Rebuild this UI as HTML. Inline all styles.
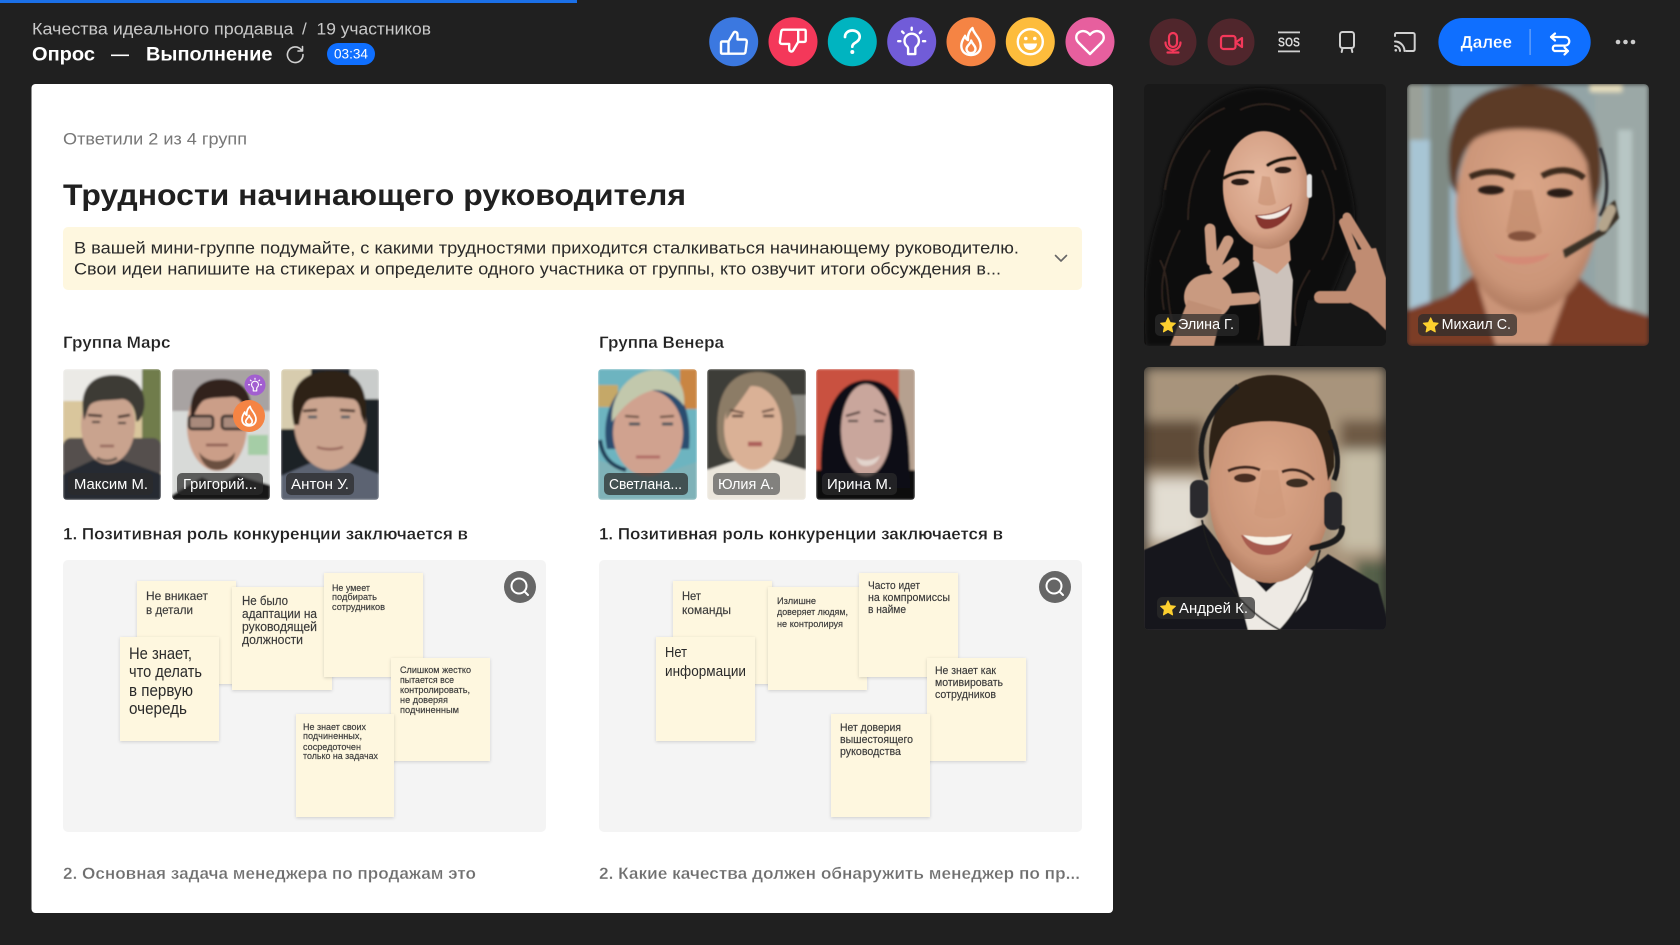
<!DOCTYPE html>
<html lang="ru"><head><meta charset="utf-8"><title>Опрос — Выполнение</title>
<style>
html,body{margin:0;padding:0;background:#202020;width:1680px;height:945px;overflow:hidden}
svg{display:block;position:absolute;left:0;top:0}
text{font-family:"Liberation Sans","Noto Sans CJK SC",sans-serif;white-space:pre}
.s{fill:#3a3a3a;font-size:11px;stroke:#3a3a3a;stroke-width:.15}
.st{fill:#fef7df;filter:url(#ss)}
.l{fill:#fff;font-size:15px}
.ic{fill:none;stroke:#fff;stroke-width:2.4;stroke-linecap:round;stroke-linejoin:round}
.lab{fill:#2b2b2b;fill-opacity:.72}
</style></head><body>
<svg width="1680" height="945" viewBox="0 0 1680 945" xmlns="http://www.w3.org/2000/svg">
<defs>
<filter id="ss" x="-10%" y="-10%" width="125%" height="125%"><feDropShadow dx="0" dy="1" stdDeviation="1.5" flood-color="#000" flood-opacity=".16"/></filter>
<filter id="b05" x="-20%" y="-20%" width="140%" height="140%"><feGaussianBlur stdDeviation=".6"/></filter>
<filter id="b1" x="-20%" y="-20%" width="140%" height="140%"><feGaussianBlur stdDeviation="1"/></filter>
<filter id="b2" x="-20%" y="-20%" width="140%" height="140%"><feGaussianBlur stdDeviation="2.500"/></filter>
<filter id="b5" x="-20%" y="-20%" width="140%" height="140%"><feGaussianBlur stdDeviation="6"/></filter>
<radialGradient id="skinA" cx=".45" cy=".42" r=".62"><stop offset="0" stop-color="#e6b9a0"/><stop offset=".7" stop-color="#d6a287"/><stop offset="1" stop-color="#b07c62"/></radialGradient>
<radialGradient id="skinM" cx=".5" cy=".42" r=".62"><stop offset="0" stop-color="#dba688"/><stop offset=".75" stop-color="#cb9578"/><stop offset="1" stop-color="#a87358"/></radialGradient>
<radialGradient id="skinE" cx=".5" cy=".42" r=".62"><stop offset="0" stop-color="#ecc7b0"/><stop offset=".75" stop-color="#e0ad95"/><stop offset="1" stop-color="#b5806a"/></radialGradient>
<clipPath id="t1"><rect x="1144" y="84" width="242" height="262" rx="5"/></clipPath>
<clipPath id="t2"><rect x="1407" y="84" width="242" height="262" rx="5"/></clipPath>
<clipPath id="t3"><rect x="1144" y="367" width="242" height="263" rx="5"/></clipPath>
<clipPath id="a1"><rect x="63" y="369" width="98" height="131" rx="4"/></clipPath>
<clipPath id="a2"><rect x="172" y="369" width="98" height="131" rx="4"/></clipPath>
<clipPath id="a3"><rect x="281" y="369" width="98" height="131" rx="4"/></clipPath>
<clipPath id="a4"><rect x="598" y="369" width="99" height="131" rx="4"/></clipPath>
<clipPath id="a5"><rect x="707" y="369" width="99" height="131" rx="4"/></clipPath>
<clipPath id="a6"><rect x="816" y="369" width="99" height="131" rx="4"/></clipPath>
<path id="star" d="M0-7.200 2.200-2.400 7.400-1.800 3.600 1.700 4.600 6.900 0 4.300-4.600 6.900-3.600 1.700-7.400-1.800-2.200-2.400Z" fill="#fdd02f" stroke="#fdd02f" stroke-width="1" stroke-linejoin="round"/>
<g id="flame" class="ic"><path d="M1.500-14c1 6 8.200 9.800 8.200 17.800 0 5.600-4 9.200-9.700 9.200s-9.700-3.600-9.700-9.200c0-4.500 2.300-7.300 3.800-10 .5 2.500 1.500 3.800 2.900 4.300-.6-5 1.500-9.600 4.500-12.100z"/><path d="M.2-1.500c.5 3 4.300 5 4.300 8.300 0 2.800-2 4.300-4.500 4.300s-4.500-1.500-4.500-4.300c0-3 4.200-5 4.700-8.300z"/></g>
<g id="bulb" class="ic"><path d="M-4.500 4.800a7.200 7.200 0 1 1 9 0c-.7.6-.9 1.300-.9 2.200v5.400h-7.200V7c0-.9-.2-1.600-.9-2.200z"/><path d="M-13.500-.5h2.200M11.300-.5h2.200M0-14v2.200M-9.600-10.200l1.500 1.500M9.600-10.200 8.100-8.700"/></g>
</defs>

<rect width="1680" height="945" fill="#202020"/>
<rect x="0" y="0" width="577" height="3" fill="#1b70e8"/>

<!-- header text -->
<text x="32" y="34.500" fill="#c9c9c9" font-size="17" textLength="261.500" lengthAdjust="spacingAndGlyphs">Качества идеального продавца</text>
<text x="302" y="34.500" fill="#c9c9c9" font-size="17">/</text>
<text x="316.500" y="34.500" fill="#c9c9c9" font-size="17" textLength="114.500" lengthAdjust="spacingAndGlyphs">19 участников</text>
<text x="32" y="60.500" fill="#fff" font-size="19" font-weight="700" textLength="63" lengthAdjust="spacingAndGlyphs">Опрос</text>
<rect x="111" y="54.500" width="18" height="1.600" fill="#fff"/>
<text x="146" y="60.500" fill="#fff" font-size="19" font-weight="700" textLength="126.500" lengthAdjust="spacingAndGlyphs">Выполнение</text>
<path d="M301 49.500a7.800 7.800 0 1 0 2 5M302.500 46.500v4.500H298" fill="none" stroke="#d0d0d0" stroke-width="1.600" stroke-linecap="round" stroke-linejoin="round"/>
<rect x="327" y="43" width="48" height="22" rx="11" fill="#0f6fff"/>
<text x="334" y="58.500" fill="#fff" font-size="13.500" textLength="34" lengthAdjust="spacingAndGlyphs">03:34</text>

<!-- reactions -->
<circle cx="733.700" cy="41.700" r="24.500" fill="#3b78e0"/>
<path class="ic" d="M728.500 53.500V41.500l5-8.500c.9-1.800 4-1.400 4 1.500v5h7.200c1.600 0 2.300 1 2.100 2.500l-1.300 9.800c-.2 1.200-1 1.900-2.200 1.900H722.500c-1 0-1.500-.6-1.500-1.500V43c0-1 .6-1.500 1.500-1.500h6"/>
<circle cx="793" cy="41.700" r="24.500" fill="#f4385a"/>
<path class="ic" transform="rotate(180 763.350 41.700)" d="M728.500 53.500V41.500l5-8.500c.9-1.800 4-1.400 4 1.500v5h7.200c1.600 0 2.300 1 2.100 2.500l-1.300 9.800c-.2 1.200-1 1.900-2.200 1.900H722.500c-1 0-1.500-.6-1.500-1.500V43c0-1 .6-1.500 1.500-1.500h6"/>
<circle cx="852.300" cy="41.700" r="24.500" fill="#00b4c0"/>
<path class="ic" style="stroke-width:2.700" d="M845 37c0-4 3.300-6.500 7.200-6.500 4.100 0 7.500 2.500 7.500 6.300 0 3-2 4.500-4 5.700-2 1.200-3.400 2.100-3.400 4.200"/><circle cx="852.300" cy="52" r="2" fill="#fff"/>
<circle cx="911.700" cy="41.700" r="24.500" fill="#715cd8"/>
<use href="#bulb" x="911.700" y="41.700"/>
<circle cx="971" cy="41.700" r="24.500" fill="#f58444"/>
<use href="#flame" x="971" y="42"/>
<circle cx="1030.300" cy="41.700" r="24.500" fill="#fdbc3c"/>
<circle class="ic" cx="1030.300" cy="41.700" r="12.500"/><circle cx="1025.800" cy="38.500" r="1.800" fill="#fff"/><circle cx="1034.800" cy="38.500" r="1.800" fill="#fff"/><path d="M1023.500 43.500h13.600c-.4 4.200-3.200 6.500-6.800 6.500s-6.400-2.300-6.800-6.500z" fill="#fff"/>
<circle cx="1090" cy="41.700" r="24.500" fill="#e75f9e"/>
<path class="ic" d="M1090 54l-11.500-11.500c-3-3-3-7.500 0-9.800 3-2.400 8-2.400 11.500 2 3.500-4.400 8.500-4.400 11.500-2 3 2.300 3 6.800 0 9.800z"/>

<!-- media buttons -->
<circle cx="1173" cy="42" r="23.500" fill="#50262c"/>
<g fill="none" stroke="#f4385a" stroke-width="2.200" stroke-linecap="round"><rect x="1169" y="33" width="8" height="14" rx="4"/><path d="M1165.500 42.500a7.500 7.500 0 0 0 15 0M1173 50v2.500M1167.500 52.500h11"/></g>
<circle cx="1231" cy="42" r="23.500" fill="#50262c"/>
<g fill="none" stroke="#f4385a" stroke-width="2.200" stroke-linejoin="round"><rect x="1221" y="36" width="14.500" height="13" rx="2.500"/><path d="M1235.500 42.500l6.500-4.500v9z"/></g>
<rect x="1278" y="31.500" width="22" height="1.800" fill="#d0d0d0"/><rect x="1278" y="50.500" width="22" height="1.800" fill="#d0d0d0"/>
<text x="1278" y="46.500" fill="#d8d8d8" font-size="13" font-weight="700" textLength="22" lengthAdjust="spacingAndGlyphs">SOS</text>
<g fill="none" stroke="#d0d0d0" stroke-width="2" stroke-linecap="round" stroke-linejoin="round"><rect x="1340" y="32" width="14" height="16" rx="2.500"/><path d="M1342.500 48l-.8 4M1351.500 48l.8 4"/></g>
<g fill="none" stroke="#d0d0d0" stroke-width="2" stroke-linecap="round" stroke-linejoin="round"><path d="M1395 36v-1.500c0-.8.700-1.500 1.500-1.500h16.500c1 0 1.700.7 1.700 1.700v14.600c0 1-.7 1.700-1.700 1.700h-7"/><path d="M1395 41.500a9.500 9.500 0 0 1 9.500 9.500M1395 46a5 5 0 0 1 5 5"/></g><circle cx="1395.800" cy="50.300" r="1.300" fill="#d0d0d0"/>
<rect x="1438.400" y="18" width="152.300" height="48" rx="24" fill="#0f6fff"/>
<text x="1460.500" y="47.800" fill="#fff" font-size="17.500" font-weight="700" textLength="51.500" lengthAdjust="spacingAndGlyphs" stroke="#0f6fff" stroke-width=".3">Далее</text>
<rect x="1529.500" y="29" width="1.200" height="26" fill="#72a8f8"/>
<g fill="none" stroke="#fff" stroke-width="2.200" stroke-linecap="round" stroke-linejoin="round"><path d="M1555 33.500l-4 3.500 4 3.500M1551 37h14a4.300 4.300 0 0 1 0 8.600h-10.500a3 3 0 0 0 0 5.400h13.500M1564.500 47.500l3.500 3.500-3.500 3.500"/></g>
<circle cx="1618" cy="42" r="2.300" fill="#ccc"/><circle cx="1625.500" cy="42" r="2.300" fill="#ccc"/><circle cx="1633" cy="42" r="2.300" fill="#ccc"/>

<!-- main card -->
<rect x="31.500" y="84" width="1081.500" height="829" rx="4" fill="#fff"/>
<text x="63" y="144.500" fill="#777" font-size="16.500" textLength="184" lengthAdjust="spacingAndGlyphs">Ответили 2 из 4 групп</text>
<text x="63" y="205" fill="#202020" font-size="30" font-weight="700" textLength="623" lengthAdjust="spacingAndGlyphs">Трудности начинающего руководителя</text>
<rect x="63" y="227" width="1019" height="63" rx="5" fill="#fef7df"/>
<text x="74" y="253.500" fill="#2a2a2a" font-size="17" textLength="945" lengthAdjust="spacingAndGlyphs">В вашей мини-группе подумайте, с какими трудностями приходится сталкиваться начинающему руководителю.</text>
<text x="74" y="274.500" fill="#2a2a2a" font-size="17" textLength="927" lengthAdjust="spacingAndGlyphs">Свои идеи напишите на стикерах и определите одного участника от группы, кто озвучит итоги обсуждения в...</text>
<path d="M1055.500 255.500l5.500 5.500 5.500-5.500" fill="none" stroke="#666" stroke-width="1.600" stroke-linecap="round" stroke-linejoin="round"/>
<text x="63" y="348" fill="#222" font-size="17" font-weight="700" textLength="107.500" lengthAdjust="spacingAndGlyphs" stroke="#fff" stroke-width=".25">Группа Марс</text>
<text x="599" y="348" fill="#222" font-size="17" font-weight="700" textLength="125" lengthAdjust="spacingAndGlyphs" stroke="#fff" stroke-width=".25">Группа Венера</text>

<!-- avatar: Максим -->
<g clip-path="url(#a1)"><g filter="url(#b1)">
<rect x="63" y="369" width="98" height="131" fill="#d9c69c"/><rect x="63" y="369" width="98" height="32" fill="#ebeae6"/>
<rect x="142" y="369" width="19" height="90" fill="#6f7b4c"/><rect x="63" y="438" width="98" height="40" fill="#55504e" rx="8"/>
<path d="M63 500v-26l30-14 30 0 38 14v26z" fill="#262a30"/>
<ellipse cx="108" cy="425" rx="27" ry="39" fill="#c9a38e"/>
<path d="M84 420c-6-30 6-45 30-45 22 0 33 16 30 34-2 8-5 14-8 12 0-12-6-22-14-22-14 2-26 0-32 6-3 4-3 10-6 15z" fill="#3e3a36"/>
<path d="M88 415l14 1M118 417l12-2" stroke="#3a2c26" stroke-width="2.500"/><path d="M92 422h8M118 423h8" stroke="#33292a" stroke-width="2"/>
<path d="M100 446h14" stroke="#94665c" stroke-width="2.500"/><path d="M97 458c6 4 14 4 20 0" stroke="#6a5a50" stroke-width="3" fill="none"/>
</g></g>
<rect class="lab" x="68" y="473" width="85" height="22" rx="5"/>
<text class="l" x="74" y="489" textLength="74" lengthAdjust="spacingAndGlyphs">Максим М.</text>

<!-- avatar: Григорий -->
<g clip-path="url(#a2)"><g filter="url(#b1)">
<rect x="172" y="369" width="98" height="131" fill="#d8dad8"/><rect x="172" y="369" width="98" height="42" fill="#a8a3a2"/>
<rect x="248" y="435" width="20" height="20" fill="#a5cda6"/>
<path d="M172 500v-5l30-18 15 8 20-10 33 10v15z" fill="#141212"/>
<ellipse cx="217" cy="426" rx="30" ry="45" fill="#cb9e88"/>
<path d="M191 420c-3-28 8-41 30-41 20 0 32 12 30 34l-6-2c-2-10-8-15-14-14-12 1-26 0-30 6-4 4-6 12-10 17z" fill="#33231d"/>
<rect x="189" y="416" width="24" height="13" rx="3" fill="#a98a7c" stroke="#1c1c1c" stroke-width="2.500"/><rect x="222" y="416" width="24" height="13" rx="3" fill="#a98a7c" stroke="#1c1c1c" stroke-width="2.500"/>
<path d="M206 445h22" stroke="#8a5a50" stroke-width="2.500"/><path d="M199 452c8 12 28 12 36 0 0 10-8 18-18 18-10 0-16-8-18-18z" fill="#6a5040"/>
</g></g>
<rect class="lab" x="177" y="473" width="86" height="22" rx="5"/>
<text class="l" x="183" y="489" textLength="74" lengthAdjust="spacingAndGlyphs">Григорий...</text>
<circle cx="255" cy="385" r="10.500" fill="#a25fd0"/>
<use href="#bulb" transform="translate(255 385) scale(.48)" style="stroke-width:2"/>
<circle cx="249" cy="416" r="16" fill="#f58444"/>
<use href="#flame" transform="translate(249 416.500) scale(.72)"/>

<!-- avatar: Антон -->
<g clip-path="url(#a3)"><g filter="url(#b1)">
<rect x="281" y="369" width="98" height="131" fill="#1d2026"/><rect x="281" y="369" width="30" height="60" fill="#d7ccae"/><rect x="350" y="369" width="29" height="30" fill="#c9cccb"/>
<path d="M281 500v-24l32-14h34l32 12v26z" fill="#5b6372"/>
<ellipse cx="330" cy="422" rx="36" ry="48" fill="#cba48f"/>
<path d="M294 425c-8-38 8-54 38-54 26 0 38 18 33 54l-4-10c-1-10-4-16-10-16-12-2-30-2-40 0-8 2-10 14-12 26z" fill="#2e2119"/>
<path d="M303 411l14-1M340 410l15 1" stroke="#3e2a22" stroke-width="2.500"/><path d="M308 417h9M341 417h9" stroke="#45525e" stroke-width="2.500"/>
<path d="M317 447c8 3 18 3 26 0" stroke="#96655a" stroke-width="2.500" fill="none"/>
</g></g>
<rect class="lab" x="286" y="473" width="68" height="22" rx="5"/>
<text class="l" x="291" y="489" textLength="58" lengthAdjust="spacingAndGlyphs">Антон У.</text>

<!-- avatar: Светлана -->
<g clip-path="url(#a4)"><g filter="url(#b1)">
<rect x="598" y="369" width="99" height="131" fill="#6db4c0"/><rect x="680" y="369" width="17" height="40" fill="#c98542"/><rect x="598" y="385" width="20" height="22" fill="#c5a868"/>
<path d="M598 500v-40l30 10h45l24-8v38z" fill="#7fb2b8"/>
<path d="M607 449c-8-38 12-72 42-72 28 0 44 30 40 72z" fill="#2a4d70"/>
<ellipse cx="648" cy="433" rx="35" ry="43" fill="#d0a28f"/>
<path d="M612 422c-2-30 20-52 44-52 18 0 30 14 28 36-10-14-22-16-30-16-16 4-30 14-42 32z" fill="#c2c8ac"/>
<path d="M625 416l14 1M660 417l14-1" stroke="#5a4438" stroke-width="2"/><path d="M629 424h11M662 424h11" stroke="#44525a" stroke-width="3"/>
<path d="M636 457h24" stroke="#b06a66" stroke-width="3"/>
<path d="M600 440c2 16 10 26 26 30" stroke="#1f3a54" stroke-width="4" fill="none"/>
</g></g>
<rect class="lab" x="604" y="473" width="84" height="22" rx="5"/>
<text class="l" x="609" y="489" textLength="73" lengthAdjust="spacingAndGlyphs">Светлана...</text>

<!-- avatar: Юлия -->
<g clip-path="url(#a5)"><g filter="url(#b1)">
<rect x="707" y="369" width="99" height="131" fill="#3e3d38"/><rect x="790" y="395" width="16" height="40" fill="#8d8c85"/>
<path d="M707 500v-30l30-10h36l33 10v30z" fill="#ebe6dc"/>
<path d="M718 440c-4-40 8-68 40-68 30 0 40 28 38 62-2 14-8 24-14 26h-50c-8-2-12-10-14-20z" fill="#8c7c66"/>
<ellipse cx="753" cy="428" rx="29" ry="42" fill="#dab196"/>
<path d="M726 420c0-22 6-38 30-44-8 16-20 30-30 44z" fill="#8c7c66"/>
<path d="M730 410l14 3M762 412l12-3" stroke="#60463a" stroke-width="2"/><path d="M732 416h11M763 416h11" stroke="#5c4438" stroke-width="2.500"/>
<path d="M748 444h14" stroke="#ac5d58" stroke-width="4.500"/>
</g></g>
<rect class="lab" x="713" y="473" width="67" height="22" rx="5" style="fill:#555;fill-opacity:.7"/>
<text class="l" x="718" y="489" textLength="56" lengthAdjust="spacingAndGlyphs">Юлия А.</text>

<!-- avatar: Ирина -->
<g clip-path="url(#a6)"><g filter="url(#b1)">
<rect x="816" y="369" width="99" height="131" fill="#c9513f"/><rect x="899" y="369" width="16" height="110" fill="#b6a08f"/>
<path d="M816 500v-30h99v30z" fill="#070707"/>
<path d="M822 490c-4-40 0-108 44-110 40 0 44 50 44 108z" fill="#0c1014"/>
<ellipse cx="866" cy="430" rx="25" ry="46" fill="#c9a69c"/>
<path d="M846 416l14-4M874 410l12 5" stroke="#43302e" stroke-width="2"/><path d="M848 421h10M874 421h10" stroke="#3c3634" stroke-width="2"/>
<path d="M856 457c6 5 18 4 24-2-2 8-8 11-14 11s-8-3-10-9z" fill="#e2d4cc"/>
</g></g>
<rect class="lab" x="822" y="473" width="75" height="22" rx="5"/>
<text class="l" x="827" y="489" textLength="65" lengthAdjust="spacingAndGlyphs">Ирина М.</text>

<!-- questions -->
<text x="63" y="539.500" fill="#222" font-size="17" font-weight="700" textLength="405" lengthAdjust="spacingAndGlyphs" stroke="#fff" stroke-width=".25">1. Позитивная роль конкуренции заключается в</text>
<text x="599" y="539.500" fill="#222" font-size="17" font-weight="700" textLength="404" lengthAdjust="spacingAndGlyphs" stroke="#fff" stroke-width=".25">1. Позитивная роль конкуренции заключается в</text>

<!-- panel 1 -->
<rect x="63" y="560" width="483" height="272" rx="5" fill="#f4f4f4"/>
<rect class="st" x="137" y="581" width="99" height="103"/>
<rect class="st" x="232" y="587" width="100" height="103"/>
<rect class="st" x="120" y="637" width="99" height="104"/>
<rect class="st" x="324" y="573" width="99" height="104"/>
<rect class="st" x="391" y="658" width="99" height="103"/>
<rect class="st" x="296" y="714" width="98" height="103"/>
<text class="s" x="146" y="600" textLength="62" lengthAdjust="spacingAndGlyphs" style="font-size:12px">Не вникает</text>
<text class="s" x="146" y="614" textLength="47" lengthAdjust="spacingAndGlyphs" style="font-size:12px">в детали</text>
<text class="s" x="242" y="605" textLength="46" lengthAdjust="spacingAndGlyphs" style="font-size:13px">Не было</text>
<text class="s" x="242" y="618" textLength="75" lengthAdjust="spacingAndGlyphs" style="font-size:13px">адаптации на</text>
<text class="s" x="242" y="631" textLength="75" lengthAdjust="spacingAndGlyphs" style="font-size:13px">руководящей</text>
<text class="s" x="242" y="644" textLength="61" lengthAdjust="spacingAndGlyphs" style="font-size:13px">должности</text>
<text class="s" x="332" y="591" textLength="38" lengthAdjust="spacingAndGlyphs" style="font-size:9px">Не умеет</text>
<text class="s" x="332" y="600" textLength="45" lengthAdjust="spacingAndGlyphs" style="font-size:9px">подбирать</text>
<text class="s" x="332" y="610" textLength="53" lengthAdjust="spacingAndGlyphs" style="font-size:9px">сотрудников</text>
<text x="129" y="659" fill="#2a2a2a" font-size="16.500" textLength="63" lengthAdjust="spacingAndGlyphs">Не знает,</text>
<text x="129" y="677" fill="#2a2a2a" font-size="16.500" textLength="73" lengthAdjust="spacingAndGlyphs">что делать</text>
<text x="129" y="696" fill="#2a2a2a" font-size="16.500" textLength="64" lengthAdjust="spacingAndGlyphs">в первую</text>
<text x="129" y="714" fill="#2a2a2a" font-size="16.500" textLength="58" lengthAdjust="spacingAndGlyphs">очередь</text>
<text class="s" x="400" y="673" textLength="71" lengthAdjust="spacingAndGlyphs" style="font-size:9px">Слишком жестко</text>
<text class="s" x="400" y="683" textLength="54" lengthAdjust="spacingAndGlyphs" style="font-size:9px">пытается все</text>
<text class="s" x="400" y="693" textLength="70" lengthAdjust="spacingAndGlyphs" style="font-size:9px">контролировать,</text>
<text class="s" x="400" y="703" textLength="48" lengthAdjust="spacingAndGlyphs" style="font-size:9px">не доверяя</text>
<text class="s" x="400" y="713" textLength="59" lengthAdjust="spacingAndGlyphs" style="font-size:9px">подчиненным</text>
<text class="s" x="303" y="730" textLength="63" lengthAdjust="spacingAndGlyphs" style="font-size:9px">Не знает своих</text>
<text class="s" x="303" y="739" textLength="59" lengthAdjust="spacingAndGlyphs" style="font-size:9px">подчиненных,</text>
<text class="s" x="303" y="750" textLength="58" lengthAdjust="spacingAndGlyphs" style="font-size:9px">сосредоточен</text>
<text class="s" x="303" y="759" textLength="75" lengthAdjust="spacingAndGlyphs" style="font-size:9px">только на задачах</text>
<circle cx="520" cy="587" r="16" fill="#666"/>
<g fill="none" stroke="#fff" stroke-width="2"><circle cx="519" cy="586" r="7.500"/><path d="M524.500 591.500l3.500 3.500" stroke-linecap="round"/></g>

<!-- panel 2 -->
<rect x="599" y="560" width="483" height="272" rx="5" fill="#f4f4f4"/>
<rect class="st" x="673" y="581" width="99" height="103"/>
<rect class="st" x="768" y="587" width="99" height="103"/>
<rect class="st" x="656" y="637" width="99" height="104"/>
<rect class="st" x="859" y="573" width="99" height="104"/>
<rect class="st" x="927" y="658" width="99" height="103"/>
<rect class="st" x="831" y="714" width="99" height="103"/>
<text class="s" x="682" y="600" textLength="19" lengthAdjust="spacingAndGlyphs" style="font-size:12px">Нет</text>
<text class="s" x="682" y="614" textLength="49" lengthAdjust="spacingAndGlyphs" style="font-size:12px">команды</text>
<text class="s" x="777" y="604" textLength="39" lengthAdjust="spacingAndGlyphs" style="font-size:9px">Излишне</text>
<text class="s" x="777" y="615" textLength="71" lengthAdjust="spacingAndGlyphs" style="font-size:9px">доверяет людям,</text>
<text class="s" x="777" y="627" textLength="66" lengthAdjust="spacingAndGlyphs" style="font-size:9px">не контролируя</text>
<text class="s" x="868" y="589" textLength="52" lengthAdjust="spacingAndGlyphs" style="font-size:11px">Часто идет</text>
<text class="s" x="868" y="601" textLength="82" lengthAdjust="spacingAndGlyphs" style="font-size:11px">на компромиссы</text>
<text class="s" x="868" y="613" textLength="38" lengthAdjust="spacingAndGlyphs" style="font-size:11px">в найме</text>
<text x="665" y="657" fill="#2a2a2a" font-size="14.500" textLength="22" lengthAdjust="spacingAndGlyphs">Нет</text>
<text x="665" y="676" fill="#2a2a2a" font-size="14.500" textLength="81" lengthAdjust="spacingAndGlyphs">информации</text>
<text class="s" x="935" y="674" textLength="61" lengthAdjust="spacingAndGlyphs" style="font-size:11px">Не знает как</text>
<text class="s" x="935" y="686" textLength="68" lengthAdjust="spacingAndGlyphs" style="font-size:11px">мотивировать</text>
<text class="s" x="935" y="698" textLength="61" lengthAdjust="spacingAndGlyphs" style="font-size:11px">сотрудников</text>
<text class="s" x="840" y="731" textLength="61" lengthAdjust="spacingAndGlyphs" style="font-size:11px">Нет доверия</text>
<text class="s" x="840" y="743" textLength="73" lengthAdjust="spacingAndGlyphs" style="font-size:11px">вышестоящего</text>
<text class="s" x="840" y="755" textLength="61" lengthAdjust="spacingAndGlyphs" style="font-size:11px">руководства</text>
<circle cx="1055" cy="587" r="16" fill="#666"/>
<g fill="none" stroke="#fff" stroke-width="2"><circle cx="1054" cy="586" r="7.500"/><path d="M1059.500 591.500l3.500 3.500" stroke-linecap="round"/></g>

<text x="63" y="879" fill="#6f6f6f" font-size="17" font-weight="700" textLength="413" lengthAdjust="spacingAndGlyphs" stroke="#fff" stroke-width=".3">2. Основная задача менеджера по продажам это</text>
<text x="599" y="879" fill="#6f6f6f" font-size="17" font-weight="700" textLength="481" lengthAdjust="spacingAndGlyphs" stroke="#fff" stroke-width=".3">2. Какие качества должен обнаружить менеджер по пр...</text>

<!-- tile 1: Элина -->
<g clip-path="url(#t1)">
<rect x="1144" y="84" width="242" height="262" fill="#191919"/>
<g filter="url(#b2)">
<path d="M1146 346c-4-50 0-100 16-140 2-60 44-120 100-118 50 2 78 40 88 96 10 36 4 60 -6 80-10 30-26 60-50 90l-20-8-40 0z" fill="#0f0c0b"/>
</g>
<g fill="none" stroke="#2e221e" stroke-width="2" filter="url(#b05)">
<path d="M1165 190c4-40 30-70 60-82M1180 230c-14 30-22 50-16 80M1160 260c10 18 6 40 12 60M1322 170c14 30 18 60 0 90M1300 110c20 16 28 34 36 60M1210 150c-14 20-22 40-22 70M1310 270c-12 20-18 34-14 56M1240 110c16-8 34-8 50 0M1256 290c6 20 6 36 2 50"/>
</g>
<g filter="url(#b05)">
<path d="M1296 346l12-46 78-2v48z" fill="#121316"/>
<path d="M1253 262l30-22 10 40-3 66h-26l-4-50z" fill="#ccc2bb"/>
<path d="M1253 236h36l2 24-14 14-24-14z" fill="#cf9c82"/>
<ellipse cx="1266" cy="190" rx="43" ry="59" fill="url(#skinA)" transform="rotate(-5 1266 190)"/>
<path d="M1224 178c8-5 18-7 29-6M1268 165c8-5 18-7 27-7" stroke="#1d120e" stroke-width="3.500" fill="none" stroke-linecap="round"/>
<ellipse cx="1240" cy="182" rx="9" ry="3.500" fill="#2a1d19"/><ellipse cx="1283" cy="170" rx="8.500" ry="3.500" fill="#2a1d19"/>
<path d="M1262 176l-4 26c2 4 14 5 18 1l-6-26z" fill="#c78d70" opacity=".6"/>
<path d="M1255 215c14 0 28-4 37-12 0 14-14 26-26 26-6 0-9-6-11-14z" fill="#87352e"/>
<path d="M1257 216c13 0 25-4 33-10-1 5-7 10-14 12-8 2-14 1-19-2z" fill="#f5ede6"/>
<rect x="1307" y="174" width="5" height="24" rx="2.500" fill="#e4e4e4"/>
<g stroke="#c99a80" stroke-linecap="round" fill="none">
<path d="M1210 229l2 32" stroke-width="11"/><path d="M1228 241l-13 26" stroke-width="11"/><path d="M1234 263l-27 20" stroke-width="11"/><path d="M1254 298l-27 2" stroke-width="12"/>
</g>
<ellipse cx="1208" cy="297" rx="24" ry="23" fill="#c99a80"/>
<path d="M1188 300l-18 46h44l8-36z" fill="#c08f75"/>
<g stroke="#c08c72" stroke-linecap="round" fill="none">
<path d="M1347 217l27 44" stroke-width="9"/><path d="M1343 222l14 36" stroke-width="8"/><path d="M1320 297l28 0" stroke-width="12"/>
</g>
<path d="M1354 250l22-2 10 30v52l-18-18-26-14 14-26z" fill="#c08c72"/>
</g></g>
<rect class="lab" x="1155" y="314" width="84" height="22" rx="5"/>
<use href="#star" x="1168" y="325"/>
<text class="l" x="1178" y="329" textLength="56" lengthAdjust="spacingAndGlyphs">Элина Г.</text>

<!-- tile 2: Михаил -->
<g clip-path="url(#t2)"><g filter="url(#b2)">
<rect x="1407" y="84" width="242" height="262" fill="#93a4a6"/>
<rect x="1407" y="84" width="16" height="262" fill="#9aa098"/><rect x="1410" y="140" width="26" height="170" fill="#a7c5d4"/>
<rect x="1430" y="84" width="20" height="262" fill="#7f8b85"/><rect x="1450" y="150" width="10" height="160" fill="#9fbccb"/>
<rect x="1595" y="84" width="54" height="262" fill="#9ba8a6"/><rect x="1618" y="130" width="14" height="200" fill="#b7c6c4"/>
<rect x="1590" y="84" width="32" height="8" fill="#e7dfbe"/>
<path d="M1407 346v-36l40-14 28-22h100l36 30 38 12v30z" fill="#7b3e26"/>
<path d="M1478 285h92l-22 61h-52z" fill="#cb9478"/>
<ellipse cx="1527" cy="207" rx="71" ry="106" fill="url(#skinM)"/>
<path d="M1451 185c-12-68 20-101 78-101 52 0 78 36 72 101l-8 28-6-50c-8-18-18-28-40-32-30-4-56-2-72 8-14 12-18 34-18 56z" fill="#5c3a26"/>
</g>
<g filter="url(#b1)">
<path d="M1470 177c14-7 30-7 44 0M1542 176c14-8 30-8 42 2" stroke="#3e2a1e" stroke-width="6" fill="none"/>
<ellipse cx="1491" cy="190" rx="13" ry="4.500" fill="#2a1d17"/><ellipse cx="1560" cy="193" rx="13" ry="4.500" fill="#2a1d17"/>
<path d="M1514 190l-8 42c6 8 30 8 36 0l-10-42z" fill="#c28a6c" opacity=".7"/>
<ellipse cx="1522" cy="236" rx="14" ry="5" fill="#85533d"/>
<path d="M1494 254c18 4 38 4 56-1-8 14-44 16-56 1z" fill="#d48a76"/>
<path d="M1600 148c8 20 10 50 0 68" stroke="#26262a" stroke-width="3" fill="none"/>
<path d="M1565 258l40-24 14-16-4-18-10 8-6 22-36 20z" fill="#3a3028"/>
<rect x="1602" y="204" width="10" height="28" rx="5" fill="#b5a58c" transform="rotate(25 1607 218)"/>
</g></g>
<rect class="lab" x="1418" y="314" width="99" height="22" rx="5"/>
<use href="#star" x="1430.700" y="325"/>
<text class="l" x="1441.600" y="329" textLength="69.400" lengthAdjust="spacingAndGlyphs">Михаил С.</text>

<!-- tile 3: Андрей -->
<g clip-path="url(#t3)"><g filter="url(#b5)">
<rect x="1144" y="367" width="242" height="263" fill="#a8947c"/>
<rect x="1144" y="420" width="60" height="50" fill="#5f4c38"/>
<rect x="1150" y="480" width="50" height="60" fill="#e2ddd2"/>
<rect x="1340" y="440" width="46" height="110" fill="#c6bda6"/>
<rect x="1340" y="420" width="46" height="30" fill="#6e5a44"/>
<rect x="1355" y="560" width="31" height="70" fill="#55604a"/>
</g><g filter="url(#b05)">
<path d="M1144 630v-80l60-26 40 50 60 0 24-20 50 30 12 46z" fill="#16181f"/>
<path d="M1228 552l38 40 34-30 14 10-8 28-26 30h-32z" fill="#eeeae4"/>
<ellipse cx="1270" cy="492" rx="61" ry="91" fill="url(#skinM)"/>
<path d="M1210 470c-6-58 16-95 62-95 40 0 64 28 62 92l-6 14c-2-20-6-44-18-52-24-10-54-10-78-2-14 8-16 24-22 43z" fill="#2e2118"/>
<ellipse cx="1245" cy="478" rx="11" ry="4.500" fill="#4a2e22"/><ellipse cx="1297" cy="483" rx="11" ry="4.500" fill="#3e2e24"/>
<path d="M1228 471c10-5 24-5 32-1M1282 472c12-5 24-1 32 8" stroke="#432a20" stroke-width="3" fill="none"/>
<path d="M1262 470l-8 44c6 6 26 6 32 0l-8-44z" fill="#cf987a" opacity=".7"/>
<path d="M1241 535c18 3 36 3 52-1-5 14-14 21-26 21-12 0-21-7-26-20z" fill="#a85c50"/>
<path d="M1243 535c16 3 34 3 49-1-4 7-12 11-24 11-11 0-19-4-25-10z" fill="#f8f2e6"/>
<path d="M1206 480c-12-38-2-66 32-94M1330 430c8 18 10 36 4 50" stroke="#1a1a1c" stroke-width="5" fill="none"/>
<rect x="1190" y="480" width="18" height="38" rx="8" fill="#2a2c2e"/><rect x="1324" y="492" width="18" height="38" rx="8" fill="#28282a"/>
<path d="M1342 528c0 10-8 16-30 20" stroke="#1a1a1c" stroke-width="6" fill="none" stroke-linecap="round"/>
<path d="M1202 520c8 50 40 90 78 110M1320 550c-8 30-20 60-40 80" stroke="#1c1c1c" stroke-width="1.800" fill="none"/>
</g></g>
<rect class="lab" x="1157" y="597" width="98" height="22" rx="5"/>
<use href="#star" x="1168" y="608"/>
<text class="l" x="1179" y="613" textLength="69" lengthAdjust="spacingAndGlyphs">Андрей К.</text>
</svg>
</body></html>
